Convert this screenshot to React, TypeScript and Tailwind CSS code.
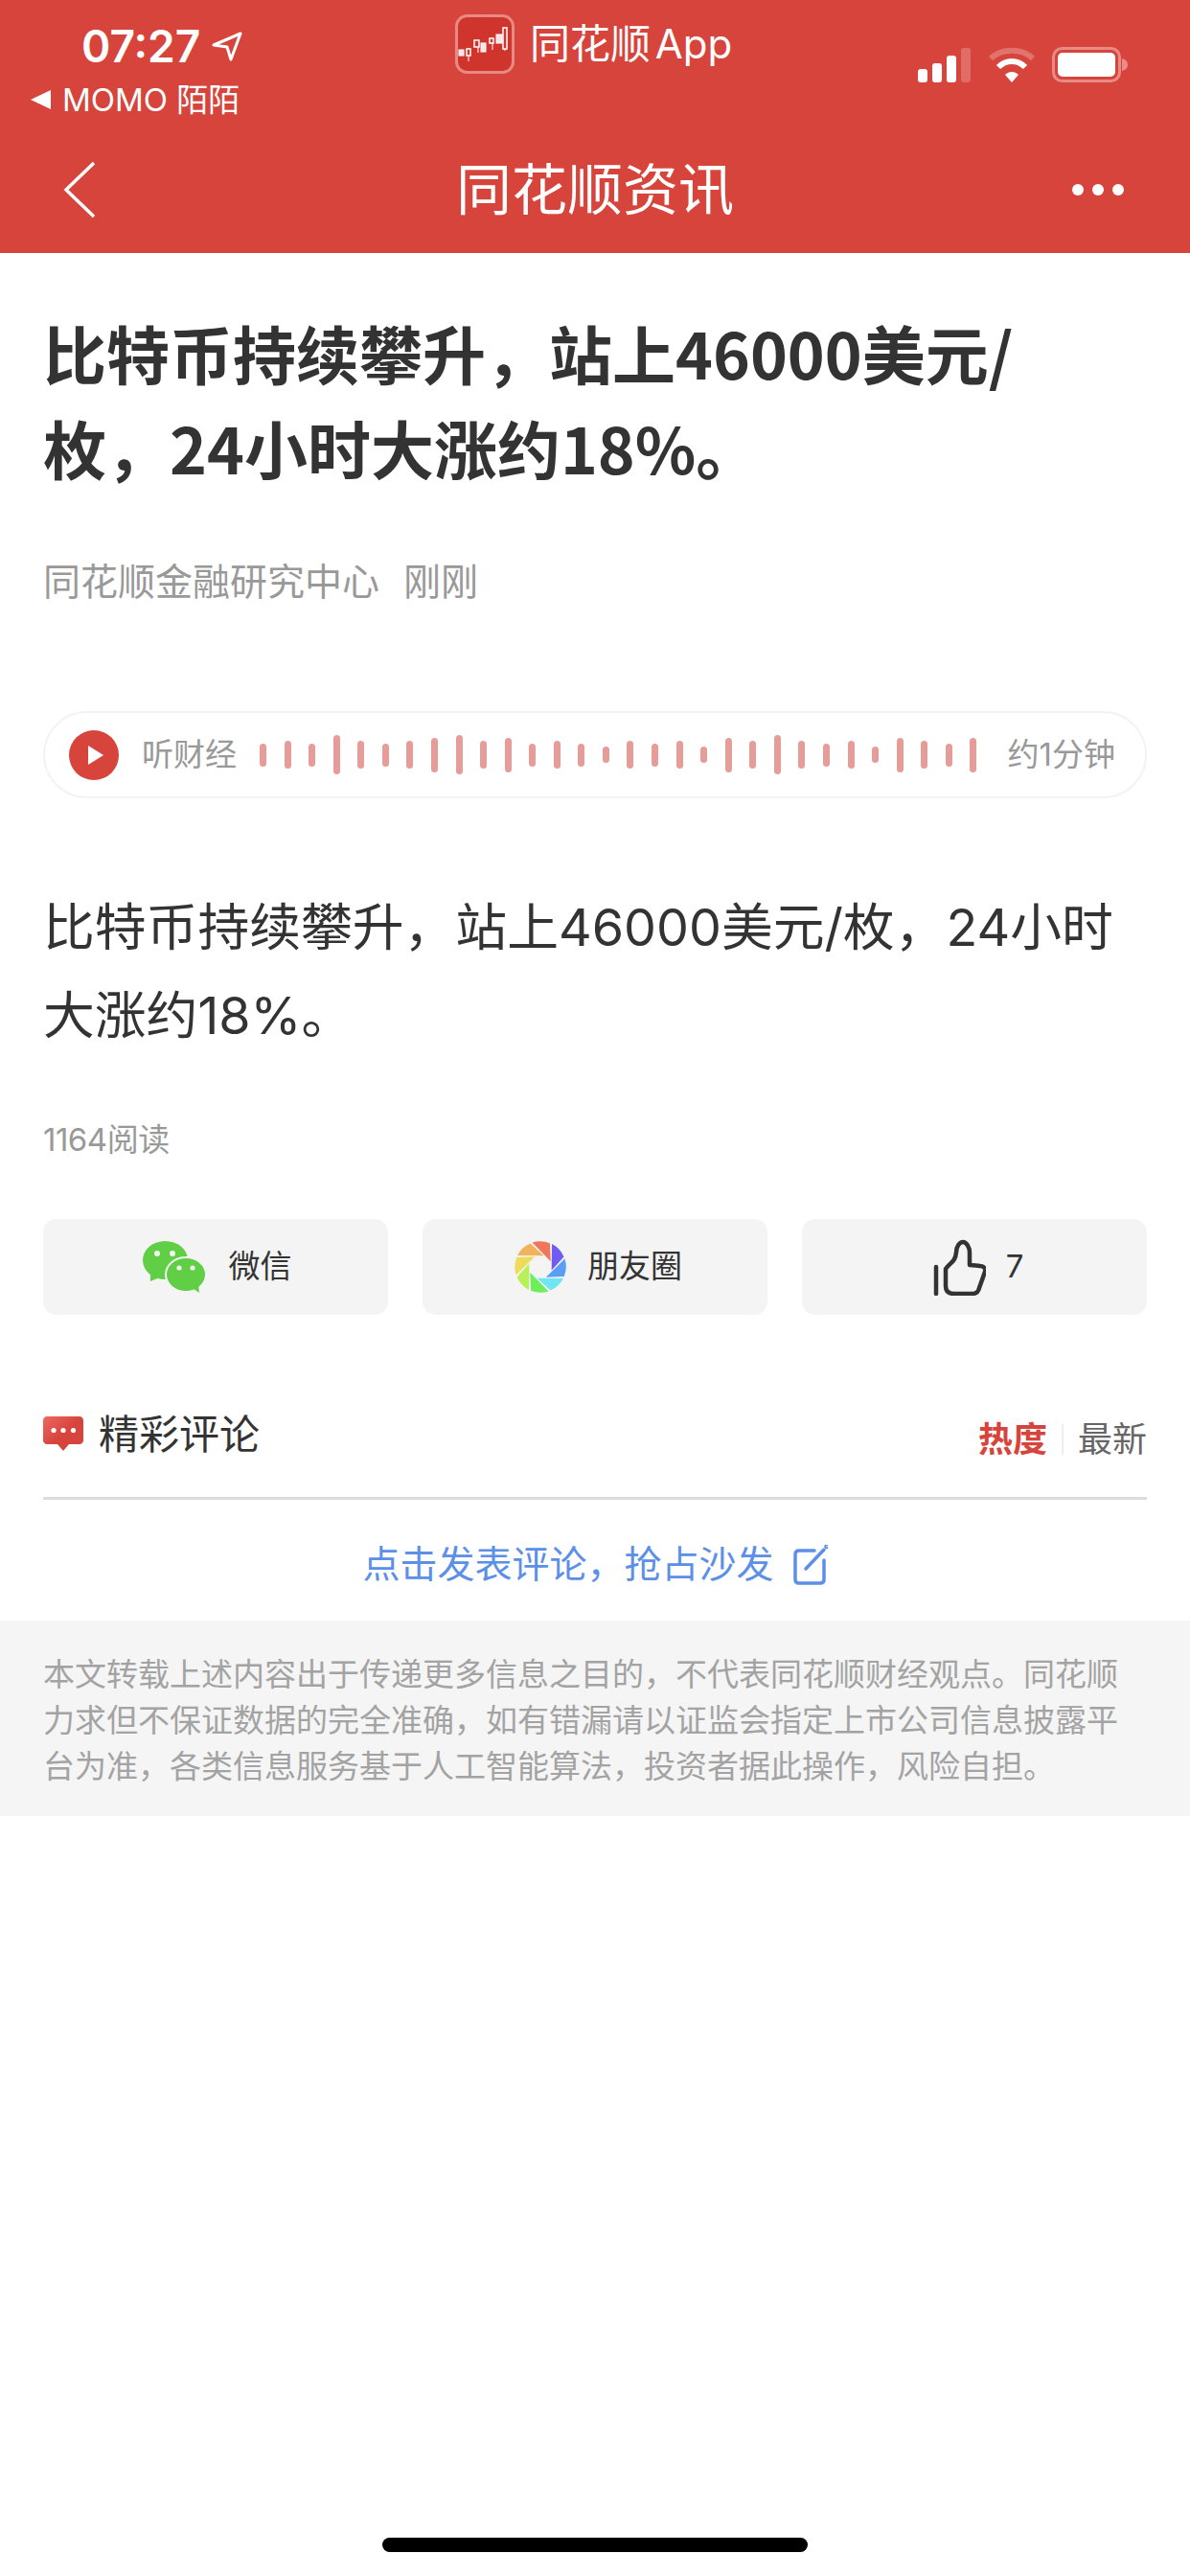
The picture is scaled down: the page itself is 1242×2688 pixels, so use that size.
const FONT = 'font-["Inter","Noto_Sans_CJK_SC",sans-serif]';

const bars = [24, 29, 24, 41, 29, 24, 29, 36, 41, 29, 36, 24, 29, 24, 17, 29, 24, 29, 17, 36, 29, 41, 29, 24, 29, 17, 36, 29, 24, 36];

const blades = ['#6f5cf0', '#5b9ef5', '#70e6f2', '#6fee5c', '#b9ef59', '#f0dc5c', '#f0b25c', '#ee7859'];

function Candle() {
  return (
    <svg width="62" height="62" viewBox="0 0 62 62" className="shrink-0">
      <rect x="1.5" y="1.5" width="59" height="59" rx="11" fill="#d0352d" stroke="#e88a84" strokeWidth="3" />
      <g fill="#f8e4e2" stroke="#fff" strokeWidth="1">
        <rect x="4" y="37" width="5" height="6" />
        <path d="M14 35v14M24 28v12M39 25v12M52 16v22" />
        <rect x="12" y="36" width="4" height="7" fill="#d0352d" strokeWidth="1.5" />
        <rect x="20" y="27" width="5" height="7" fill="#d0352d" strokeWidth="1.5" />
        <rect x="27" y="30" width="5" height="9" />
        <rect x="36" y="25" width="4" height="5" fill="#d0352d" strokeWidth="1.5" />
        <rect x="43" y="21" width="6" height="9" />
        <rect x="50" y="14" width="4" height="22" fill="#d0352d" strokeWidth="1.5" />
      </g>
    </svg>
  );
}

function StatusIcons() {
  return (
    <div className="flex items-center">
      <svg width="65" height="36" viewBox="0 0 65 36">
        <rect x="0" y="22" width="10" height="14" rx="3" fill="#fff" />
        <rect x="15" y="16" width="10" height="20" rx="3" fill="#fff" />
        <rect x="30" y="8" width="10" height="28" rx="3" fill="#fff" />
        <rect x="45" y="0" width="10" height="36" rx="3" fill="#fff" fillOpacity="0.22" />
      </svg>
      <svg width="48" height="36" viewBox="0 0 48 36" className="ml-[9px]">
        <path d="M2 11C14 0 34 0 46 11" fill="none" stroke="#fff" strokeOpacity="0.25" strokeWidth="6" />
        <path d="M10 20C18 12 30 12 38 20" fill="none" stroke="#fff" strokeWidth="6" />
        <path d="M17 28C21 24 27 24 31 28L24 36Z" fill="#fff" />
      </svg>
      <svg width="80" height="37" viewBox="0 0 80 37" className="ml-[18px]">
        <rect x="1.5" y="1.5" width="69" height="34" rx="9" fill="none" stroke="#fff" strokeOpacity="0.38" strokeWidth="3" />
        <rect x="6" y="6" width="60" height="25" rx="5" fill="#fff" />
        <path d="M73 12C77 13 79 15 79 18.500C79 22 77 24 73 25Z" fill="#fff" fillOpacity="0.4" />
      </svg>
    </div>
  );
}

function Wechat() {
  return (
    <svg width="66" height="55" viewBox="0 0 66 55">
      <ellipse cx="23.500" cy="20" rx="23.500" ry="20" fill="#61cf46" />
      <path d="M8 32L8 42L20 37Z" fill="#61cf46" />
      <ellipse cx="45" cy="35" rx="21" ry="18" fill="#61cf46" stroke="#f4f4f4" strokeWidth="2" />
      <path d="M50 48L59 54L58 45Z" fill="#61cf46" />
      <circle cx="15" cy="13" r="3" fill="#f4f4f4" />
      <circle cx="31" cy="13" r="3" fill="#f4f4f4" />
      <circle cx="38" cy="28" r="2.600" fill="#f4f4f4" />
      <circle cx="52" cy="28" r="2.600" fill="#f4f4f4" />
    </svg>
  );
}

function Moments() {
  return (
    <svg width="54" height="54" viewBox="-27 -27 54 54">
      {blades.map((c, i) => (
        <path key={i} d="M11.700 3.500L12 -24A27 27 0 0 1 24.500 -10.500Z" fill={c} transform={`rotate(${i * 45})`} />
      ))}
    </svg>
  );
}

function Thumb() {
  return (
    <svg width="56" height="60" viewBox="0 0 56 60" fill="none" stroke="#333" strokeLinecap="round" strokeLinejoin="round" strokeWidth="4.500">
      <path d="M4 30V58" />
      <path d="M14 32C19 25 24 25 25 15C25 8 29 4 32 4C36 4 39 10 39 15V28L50 29C54 29 56 32 55 35L49 52C48 56 46 58 42 58H23C17 58 14 55 14 50Z" />
    </svg>
  );
}

function CommentIcon() {
  return (
    <svg width="42" height="36" viewBox="0 0 42 36">
      <defs>
        <linearGradient id="cg" x1="0" y1="0" x2="1" y2="1">
          <stop offset="0" stopColor="#ec6a62" />
          <stop offset="0.5" stopColor="#d7443c" />
        </linearGradient>
      </defs>
      <path d="M4 0H38C40 0 42 2 42 4V25C42 27 40 29 38 29H27L21 36L15 29H4C2 29 0 27 0 25V4C0 2 2 0 4 0Z" fill="url(#cg)" />
      <circle cx="11" cy="14.500" r="2.600" fill="#fff" />
      <circle cx="21" cy="14.500" r="2.600" fill="#fff" />
      <circle cx="31.500" cy="14.500" r="2.600" fill="#fff" />
    </svg>
  );
}

function EditIcon() {
  return (
    <svg width="36" height="42" viewBox="0 0 36 42" fill="none" stroke="#5b8fe8" strokeLinecap="round" strokeWidth="3.500">
      <path d="M22 6H6C3.500 6 2 7.500 2 10V36C2 38.500 3.500 40 6 40H28C30.500 40 32 38.500 32 36V16" />
      <path d="M13 25L32 5" />
      <circle cx="35" cy="1.500" r="1" />
    </svg>
  );
}

export default function App() {
  return (
    <div className={`${FONT} flex min-h-[2688px] w-[1242px] flex-col bg-white text-[#333]`}>
      <header className="flex h-[264px] flex-col bg-[#d7443c] text-white">
        <div className="relative h-[138px] px-[30px]">
          <div className="pt-[24px]">
            <div className="flex items-center pl-[55px] leading-[48px]">
              <span className="text-[46px] font-semibold">07:27</span>
              <svg width="32" height="32" viewBox="0 0 32 32" className="ml-[12px]">
                <path d="M2 15L30 3L20 30L16 17Z" fill="none" stroke="#fff" strokeWidth="3" strokeLinejoin="round" />
              </svg>
            </div>
            <div className="mt-[12px] flex items-center text-[33px] leading-[40px]">
              <span className="ml-[2px] mr-[12px] h-0 w-0 border-y-[10px] border-r-[21px] border-y-transparent border-r-white" />
              <span>MOMO 陌陌</span>
            </div>
          </div>
          <div className="absolute left-[475px] top-[15px] flex items-center gap-[16px]">
            <Candle />
            <span className="text-[42px] leading-[62px] [word-spacing:-7px]">同花顺 App</span>
          </div>
          <div className="absolute right-[64px] top-[49px]">
            <StatusIcons />
          </div>
        </div>
        <nav className="grid flex-1 grid-cols-[1fr_auto_1fr] items-center pb-[6px] pl-[65px] pr-[69px]">
          <svg width="36" height="60" viewBox="0 0 36 60" fill="none" stroke="#fff" strokeWidth="3.500">
            <path d="M33 2L4 30L33 58" />
          </svg>
          <h1 className="ml-[4px] text-[58px] font-normal leading-[68px]">同花顺资讯</h1>
          <div className="flex justify-end gap-[9px]">
            <span className="size-[12px] rounded-full bg-white" />
            <span className="size-[12px] rounded-full bg-white" />
            <span className="size-[12px] rounded-full bg-white" />
          </div>
        </nav>
      </header>

      <main className="flex flex-col px-[45px]">
        <h2 className='mt-[54px] max-w-[1080px] font-["Noto_Sans_CJK_SC",sans-serif] text-[66px] font-bold leading-[99px] text-[#333]'>
          比特币持续攀升，站上46000美元/枚，24小时大涨约18%。
        </h2>
        <p className="mt-[67px] flex gap-[25px] text-[39px] leading-[48px] text-[#999]">
          <span>同花顺金融研究中心</span>
          <span>刚刚</span>
        </p>

        <div className="mt-[111px] flex h-[91px] items-center rounded-full border-2 border-[#f3f3f3] pl-[25px] pr-[31px]">
          <span className="flex size-[52px] shrink-0 items-center justify-center rounded-full bg-[#d7443c]">
            <span className="ml-[4px] h-0 w-0 border-y-[10px] border-l-[16px] border-y-transparent border-l-white" />
          </span>
          <span className="ml-[24px] w-[100px] shrink-0 text-[33px] text-[#999]">听财经</span>
          <div className="ml-[23px] flex flex-1 items-center justify-between">
            {bars.map((h, i) => (
              <span key={i} className="w-[7px] rounded-full bg-[#e69c98]" style={{ height: h }} />
            ))}
          </div>
          <span className="ml-[32px] shrink-0 text-[33px] text-[#999]">约1分钟</span>
        </div>

        <p className="mt-[89px] text-[53.800px] leading-[92px] text-[#333]">比特币持续攀升，站上46000美元/枚，24小时大涨约18%。</p>
        <p className="mt-[63px] text-[33px] leading-[40px] tracking-[-0.500px] text-[#999]">1164阅读</p>

        <div className="mt-[63px] grid grid-cols-3 gap-[36px]">
          <button className="flex h-[100px] items-center justify-center gap-[24px] rounded-[14px] bg-[#f4f4f4] pl-[3px] text-[33px] text-[#333]">
            <Wechat />
            <span>微信</span>
          </button>
          <button className="flex h-[100px] items-center justify-center gap-[22px] rounded-[14px] bg-[#f4f4f4] pl-[7px] text-[33px] text-[#333]">
            <Moments />
            <span>朋友圈</span>
          </button>
          <button className="flex h-[100px] items-center justify-center gap-[21px] rounded-[14px] bg-[#f4f4f4] pl-[7px] text-[33px] text-[#333]">
            <Thumb />
            <span>7</span>
          </button>
        </div>

        <div className="mt-[94px] box-content flex h-[96px] items-start justify-between border-b-[3px] border-[#dddddd]">
          <div className="flex h-[60px] items-center gap-[16px] text-[42px] text-[#333]">
            <CommentIcon />
            <span>精彩评论</span>
          </div>
          <div className="mt-[6px] flex h-[60px] items-center text-[36px]">
            <span className="font-bold text-[#d7443c]">热度</span>
            <span className="mx-[15px] h-[32px] w-[2px] bg-[#eeeeee]" />
            <span className="text-[#666]">最新</span>
          </div>
        </div>

        <div className="flex h-[126px] items-center justify-center gap-[20px] pt-[9px] text-[39px] text-[#5b8fe8]">
          <span>点击发表评论，抢占沙发</span>
          <EditIcon />
        </div>
      </main>

      <section className="bg-[#f5f5f5] px-[45px] pb-[28px] pt-[32px] text-[33px] leading-[48px] text-[#a3a3a3]">
        本文转载上述内容出于传递更多信息之目的，不代表同花顺财经观点。同花顺力求但不保证数据的完全准确，如有错漏请以证监会指定上市公司信息披露平台为准，各类信息服务基于人工智能算法，投资者据此操作，风险自担。
      </section>

      <div className="mt-auto flex justify-center pb-[25px]">
        <span className="h-[15px] w-[444px] rounded-full bg-black" />
      </div>
    </div>
  );
}
